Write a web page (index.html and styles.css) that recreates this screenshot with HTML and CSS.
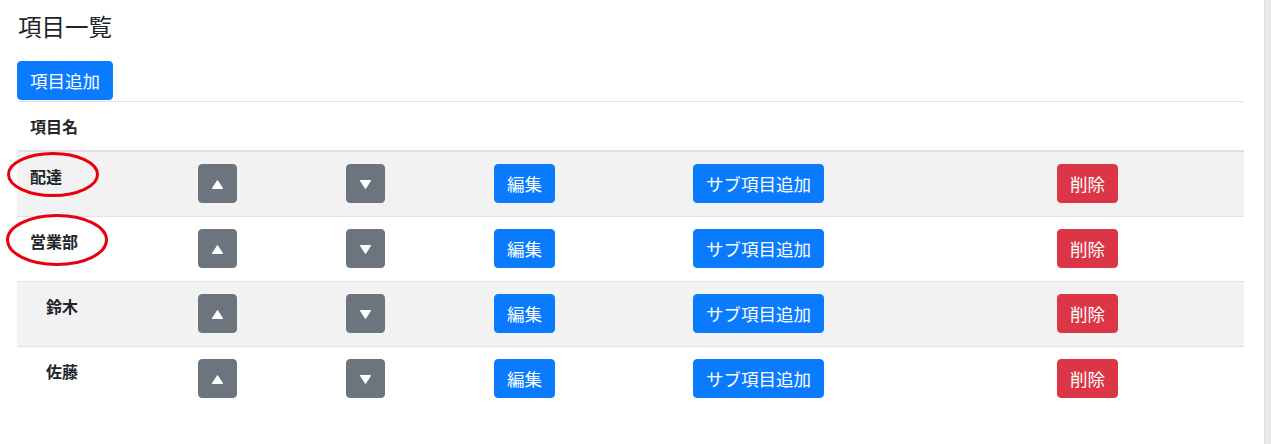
FILE: index.html
```html
<!DOCTYPE html>
<html lang="ja">
<head>
  <meta charset="UTF-8" />
  <meta name="viewport" content="width=device-width, initial-scale=1" />
  <title>項目一覧</title>
  <link rel="stylesheet" href="styles.css">
</head>
<body>

<div class="page">
  <main class="content">
    <h4 class="title">項目一覧</h4>
    <button class="btn btn-primary">項目追加</button>

    <table class="item-table">
      <colgroup>
        <col class="col-name">
        <col class="col-up">
        <col class="col-down">
        <col class="col-edit">
        <col class="col-sub">
        <col class="col-del">
      </colgroup>
      <thead>
        <tr>
          <th colspan="6">項目名</th>
        </tr>
      </thead>
      <tbody>
        <tr class="striped">
          <td class="name">
            配達
            <svg class="mark mark-1" viewBox="0 0 92 45"><ellipse cx="46" cy="22.5" rx="44.5" ry="21" /></svg>
          </td>
          <td><button class="btn btn-secondary btn-arrow"><svg viewBox="0 0 11 9"><path d="M5.5 0.8 L10.4 8.4 L0.6 8.4 Z" /></svg></button></td>
          <td><button class="btn btn-secondary btn-arrow"><svg viewBox="0 0 11 9"><path d="M0.6 0.6 L10.4 0.6 L5.5 8.2 Z" /></svg></button></td>
          <td><button class="btn btn-primary">編集</button></td>
          <td><button class="btn btn-primary">サブ項目追加</button></td>
          <td><button class="btn btn-danger">削除</button></td>
        </tr>
        <tr>
          <td class="name">
            営業部
            <svg class="mark mark-2" viewBox="0 0 102 52"><ellipse cx="51" cy="26" rx="49.5" ry="24.5" /></svg>
          </td>
          <td><button class="btn btn-secondary btn-arrow"><svg viewBox="0 0 11 9"><path d="M5.5 0.8 L10.4 8.4 L0.6 8.4 Z" /></svg></button></td>
          <td><button class="btn btn-secondary btn-arrow"><svg viewBox="0 0 11 9"><path d="M0.6 0.6 L10.4 0.6 L5.5 8.2 Z" /></svg></button></td>
          <td><button class="btn btn-primary">編集</button></td>
          <td><button class="btn btn-primary">サブ項目追加</button></td>
          <td><button class="btn btn-danger">削除</button></td>
        </tr>
        <tr class="striped">
          <td class="name sub">鈴木</td>
          <td><button class="btn btn-secondary btn-arrow"><svg viewBox="0 0 11 9"><path d="M5.5 0.8 L10.4 8.4 L0.6 8.4 Z" /></svg></button></td>
          <td><button class="btn btn-secondary btn-arrow"><svg viewBox="0 0 11 9"><path d="M0.6 0.6 L10.4 0.6 L5.5 8.2 Z" /></svg></button></td>
          <td><button class="btn btn-primary">編集</button></td>
          <td><button class="btn btn-primary">サブ項目追加</button></td>
          <td><button class="btn btn-danger">削除</button></td>
        </tr>
        <tr>
          <td class="name sub">佐藤</td>
          <td><button class="btn btn-secondary btn-arrow"><svg viewBox="0 0 11 9"><path d="M5.5 0.8 L10.4 8.4 L0.6 8.4 Z" /></svg></button></td>
          <td><button class="btn btn-secondary btn-arrow"><svg viewBox="0 0 11 9"><path d="M0.6 0.6 L10.4 0.6 L5.5 8.2 Z" /></svg></button></td>
          <td><button class="btn btn-primary">編集</button></td>
          <td><button class="btn btn-primary">サブ項目追加</button></td>
          <td><button class="btn btn-danger">削除</button></td>
        </tr>
      </tbody>
    </table>
  </main>
  <div class="scroll-track"></div>
</div>

</body>
</html>
```

FILE: styles.css
```css
:root {
  --text: #212529;
  --border: #dee2e6;
  --stripe: #f2f2f2;
  --primary: #0a7bff;
  --secondary: #6c757d;
  --danger: #dc3545;
}

/* Reset & basics */
* {
  box-sizing: border-box;
}
html, body {
  height: 100%;
}
body {
  margin: 0;
  font-family: "Noto Sans CJK JP", "Noto Sans", sans-serif;
  color: var(--text);
  background: #fff;
}

.page {
  display: flex;
  min-height: 100%;
}
.content {
  flex: 1;
  padding: 12px 20px 0 17px;
}
.scroll-track {
  width: 7px;
  background: #e9e9e9;
  border-left: 1px solid #dcdcdc;
}

.title {
  margin: 0 0 21px 1px;
  font-size: 23.5px;
  line-height: 28px;
  font-weight: 400;
}

/* Buttons */
.btn {
  display: inline-block;
  font-family: inherit;
  font-size: 17.5px;
  line-height: 25px;
  padding: 6px 12px;
  border: 1px solid transparent;
  border-radius: 4px;
  color: #fff;
  cursor: pointer;
  vertical-align: top;
}
.btn-primary {
  background-color: var(--primary);
  border-color: var(--primary);
}
.btn-secondary {
  background-color: var(--secondary);
  border-color: var(--secondary);
}
.btn-danger {
  background-color: var(--danger);
  border-color: var(--danger);
}
.btn-arrow {
  width: 39px;
  height: 39px;
  padding: 0;
  display: inline-flex;
  align-items: center;
  justify-content: center;
}
.btn-arrow svg {
  width: 11px;
  height: 9px;
  margin-top: 2px;
  fill: #fff;
  stroke: #fff;
  stroke-width: 1.2;
  stroke-linejoin: round;
}

/* Table */
.item-table {
  width: 100%;
  margin-top: 1px;
  border-collapse: collapse;
  table-layout: fixed;
}
.col-name { width: 168px; }
.col-up { width: 148px; }
.col-down { width: 148px; }
.col-edit { width: 199px; }
.col-sub { width: 364px; }
.col-del { width: 200px; }

.item-table th {
  text-align: left;
  font-size: 16px;
  line-height: 24px;
  font-weight: 700;
  padding: 12px 13px;
  border-top: 1px solid var(--border);
  border-bottom: 2px solid var(--border);
}
.item-table td {
  padding: 12px 13px 13px;
  vertical-align: top;
  border-bottom: 1px solid var(--border);
}
.item-table tr:last-child td {
  border-bottom: none;
}
.item-table tr.striped td {
  background: var(--stripe);
}
.item-table td.name {
  position: relative;
  font-size: 16px;
  line-height: 24px;
  font-weight: 700;
}
.item-table td.name.sub {
  padding-left: 29px;
}

/* Red annotation marks */
.mark {
  position: absolute;
  fill: none;
  stroke: #e8000b;
  stroke-width: 3;
  overflow: visible;
}
.mark-1 {
  left: -10px;
  top: 0;
  width: 92px;
  height: 45px;
}
.mark-2 {
  left: -11px;
  top: -3px;
  width: 102px;
  height: 52px;
}
```
